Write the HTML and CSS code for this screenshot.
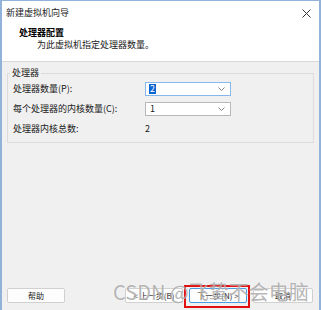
FILE: index.html
```html
<!DOCTYPE html>
<html lang="zh-CN">
<head>
<meta charset="utf-8">
<link rel="stylesheet" href="styles.css">
</head>
<body>
<div class="window">
  <div class="top">
    <div class="titlebar">
      <span class="title">新建虚拟机向导</span>
      <svg class="close" width="9" height="9" viewBox="0 0 9 9"><path d="M0.5 0.5 L8.5 8.5 M8.5 0.5 L0.5 8.5" stroke="#333" stroke-width="1" fill="none"/></svg>
    </div>
    <div class="header">
      <div class="h-title">处理器配置</div>
      <div class="h-sub">为此虚拟机指定处理器数量。</div>
    </div>
  </div>
  <div class="content">
    <div class="group">
      <span class="group-label">处理器</span>
      <div class="grid">
        <span class="lbl">处理器数量(P):</span>
        <div class="combo focused"><span class="sel">2</span><svg class="chev" width="7" height="4" viewBox="0 0 7 4"><path d="M0.5 0.5 L3.5 3.5 L6.5 0.5" stroke="#777" fill="none" stroke-width="0.9"/></svg></div>
        <span class="lbl">每个处理器的内核数量(C):</span>
        <div class="combo"><span class="val">1</span><svg class="chev" width="7" height="4" viewBox="0 0 7 4"><path d="M0.5 0.5 L3.5 3.5 L6.5 0.5" stroke="#777" fill="none" stroke-width="0.9"/></svg></div>
        <span class="lbl">处理器内核总数:</span>
        <span class="total">2</span>
      </div>
    </div>
  </div>
  <div class="footer">
    <button class="btn help">帮助</button>
    <div class="nav">
      <button class="btn">&lt; 上一步(B)</button>
      <span class="mark"><button class="btn default">下一步(N) &gt;</button></span>
      <button class="btn cancel">取消</button>
    </div>
  </div>
  <div class="watermark">CSDN @飞鸷不会电脑</div>
</div>
</body>
</html>
```
FILE: styles.css
```css
html, body {
  margin: 0;
  padding: 0;
  background: #f0f0f0;
}
.window {
  position: relative;
  width: 321px;
  height: 310px;
  box-sizing: border-box;
  border-left: 2px solid #93b2d9;
  border-right: 2px solid #93b2d9;
  border-top: 1px solid #93b2d9;
  background: #f0f0f0;
  display: flex;
  flex-direction: column;
  font-family: "Noto Sans CJK SC", "Liberation Sans", sans-serif;
  font-size: 9px;
  color: #1a1a1a;
  overflow: hidden;
}
.top {
  background: #fff;
  height: 60px;
  border-bottom: 1px solid #d8d8d8;
  flex: none;
}
.titlebar {
  display: flex;
  justify-content: space-between;
  align-items: center;
  height: 12px;
  padding: 6px 8px 0 4px;
  line-height: 12px;
}
.title {
  color: #222;
}
.header {
  margin-top: 8px;
  padding-left: 17px;
  line-height: 12px;
}
.h-title {
  font-weight: bold;
  color: #000;
}
.h-sub {
  padding-left: 18px;
  color: #222;
}
.content {
  padding: 11px 5px 0 5px;
}
.group {
  position: relative;
  border: 1px solid #dcdcdc;
  padding: 8px 5px 6px 5px;
}
.group-label {
  position: absolute;
  top: -7px;
  left: 2px;
  padding: 0 2px;
  line-height: 12px;
  background: #f0f0f0;
}
.grid {
  display: grid;
  grid-template-columns: 132px 86px;
  grid-auto-rows: 14px;
  row-gap: 6px;
  align-items: center;
  line-height: 12px;
}
.combo {
  height: 14px;
  box-sizing: border-box;
  border: 1px solid #b8b8b8;
  background: #fff;
  display: flex;
  align-items: center;
  justify-content: space-between;
  padding: 0 5px 0 3px;
}
.combo.focused {
  border-color: #86b8ec;
}
.sel {
  background: #0a64d2;
  color: #fff;
  line-height: 10px;
  padding: 0 1px;
}
.val {
  padding-left: 1px;
}
.total {
  padding-left: 0;
}
.footer {
  margin-top: auto;
  display: flex;
  justify-content: space-between;
  padding: 0 6px 7px 5px;
}
.nav {
  display: flex;
  gap: 6px;
}
.btn {
  width: 58px;
  height: 15px;
  box-sizing: border-box;
  border: 1px solid #d0d0d0;
  border-radius: 2px;
  background: #fdfdfd;
  font-family: "Noto Sans CJK SC", "Liberation Sans", sans-serif;
  font-size: 8px;
  line-height: 12px;
  padding: 0;
  color: #222;
}
.btn.cancel {
  width: 60px;
}
.btn.default {
  border-color: #4a9ae0;
}
.mark {
  position: relative;
  display: flex;
}
.mark::after {
  content: "";
  position: absolute;
  left: -5px;
  top: -3px;
  right: -3px;
  bottom: -5px;
  border: 2px solid #e01010;
}
.watermark {
  position: absolute;
  left: 111px;
  top: 278px;
  font-size: 20px;
  line-height: 26px;
  color: rgba(120, 120, 120, 0.55);
  text-shadow: 0 0 1px rgba(255, 255, 255, 0.8);
  white-space: nowrap;
  pointer-events: none;
}
```
